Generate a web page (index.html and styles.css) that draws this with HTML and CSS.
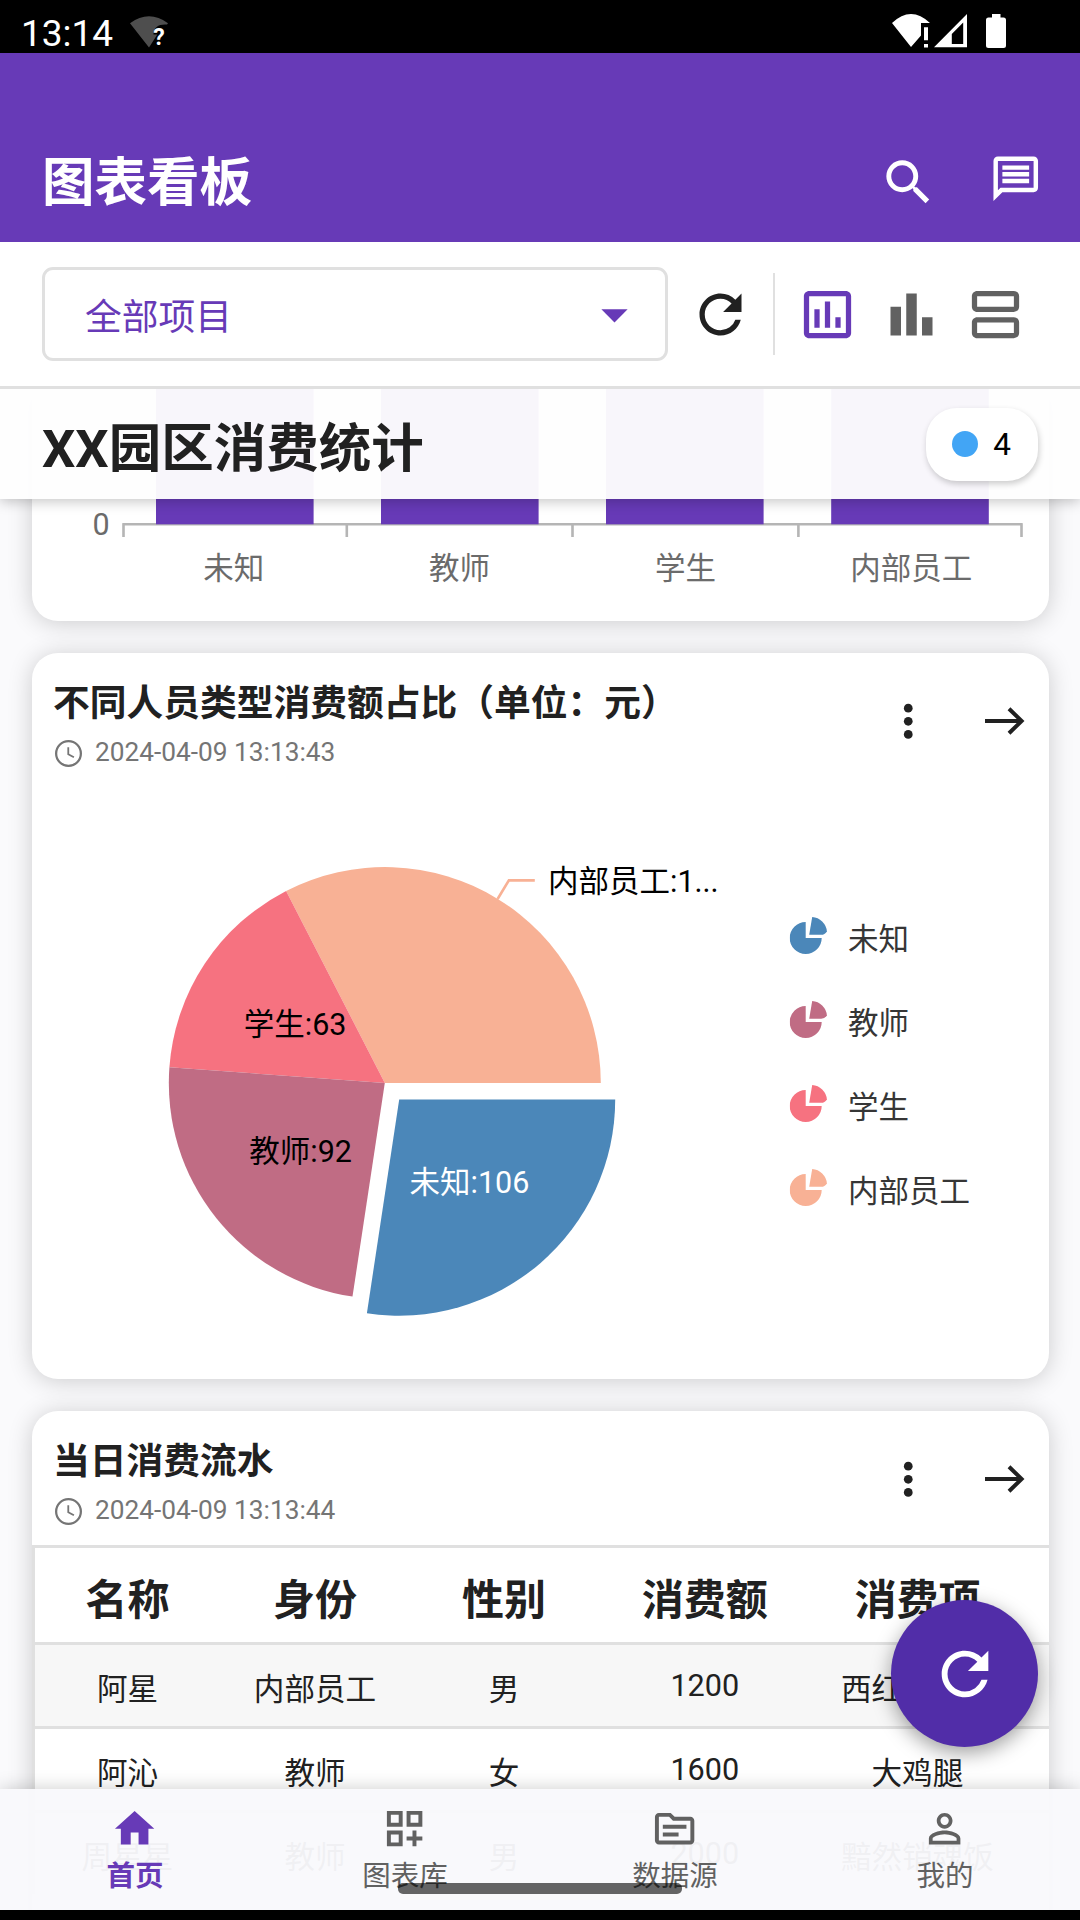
FILE: index.html
```html
<!DOCTYPE html>
<html lang="zh-CN">
<head>
  <meta charset="UTF-8">
  <title>图表看板</title>
  <link rel="stylesheet" href="styles.css">
</head>
<body>

  <svg class="defs" width="0" height="0">
    <symbol id="icon-refresh" viewBox="0 0 24 24"><path d="M17.65 6.35A7.958 7.958 0 0 0 12 4c-4.42 0-7.99 3.58-7.99 8s3.57 8 7.99 8c3.73 0 6.84-2.55 7.73-6h-2.08A5.99 5.99 0 0 1 12 18c-3.31 0-6-2.69-6-6s2.69-6 6-6c1.66 0 3.14.69 4.22 1.78L13 11h7V4l-2.35 2.35z"/></symbol>
    <symbol id="icon-clock" viewBox="0 0 24 24"><circle cx="12" cy="12" r="11" fill="none" stroke="currentColor" stroke-width="2"/><path d="M11.8 6.4v6.2l5 2.8" fill="none" stroke="currentColor" stroke-width="1.6"/></symbol>
    <symbol id="icon-more" viewBox="0 0 24 24"><circle cx="12" cy="6" r="2"/><circle cx="12" cy="12" r="2"/><circle cx="12" cy="18" r="2"/></symbol>
    <symbol id="icon-arrow" viewBox="0 0 40 28"><path d="M0 14h37M24 1.8L36.6 14 24 26.2" fill="none" stroke="currentColor" stroke-width="4"/></symbol>
    <symbol id="icon-slice" viewBox="0 0 38 38"><path d="M16 21V5a16 16 0 1 0 16 16z"/><path d="M19.5 17.8L22.5 0A16 16 0 0 1 37.2 14.4Q35 17.8 31.5 17.8z"/></symbol>
  </svg>

  <div class="phone">
    <div class="status-bar">
      <span class="clock">13:14</span>
      <svg class="status-wifi-off" width="38" height="32" viewBox="0 0 38 32">
        <path d="M0 7.2Q19-6.6 38 7.2L37 8.6C29 8 23.5 11 23.5 18.5h3.8L19 31.5z" fill="#4e4e4e"/>
        <text x="23.2" y="29.2">?</text>
      </svg>
      <div class="status-right">
        <svg width="38" height="34" viewBox="0 0 38 34" fill="#fff">
          <path d="M0 9Q19-9 38 9H29v12.5L19 33z"/>
          <path d="M32 13.2h4v13h-4zM32 30h4v3.4h-4z"/>
        </svg>
        <svg width="33" height="34" viewBox="0 0 33 34" fill="#fff">
          <path fill-rule="evenodd" d="M33 0v33.3H0zM29.2 8.6L17.8 20v10h11.4z"/>
        </svg>
        <svg class="battery" width="20" height="34" viewBox="0 0 20 34" fill="#fff">
          <path d="M6 0h8.5v3.5h3A2.5 2.5 0 0 1 20 6v25.5a2.5 2.5 0 0 1-2.5 2.5h-15A2.5 2.5 0 0 1 0 31.500V6a2.5 2.5 0 0 1 2.5-2.5H6z"/>
        </svg>
      </div>
    </div>

    <header class="app-bar">
      <h1>图表看板</h1>
      <svg class="icon-search" viewBox="0 0 24 24"><path d="M15.5 14h-.79l-.28-.27A6.471 6.471 0 0 0 16 9.5 6.5 6.5 0 1 0 9.5 16c1.61 0 3.09-.59 4.23-1.57l.27.28v.79l5 4.99L20.49 19l-4.99-5zm-6 0C7.01 14 5 11.99 5 9.5S7.01 5 9.5 5 14 7.01 14 9.5 11.99 14 9.5 14z"/></svg>
      <svg class="icon-message" viewBox="0 0 24 24"><path d="M4 4h16v12H5.17L4 17.17V4m0-2c-1.1 0-1.99.9-1.99 2L2 22l4-4h14c1.1 0 2-.9 2-2V4c0-1.1-.9-2-2-2H4zm2 10h12v2H6v-2zm0-3h12v2H6V9zm0-3h12v2H6V6z"/></svg>
    </header>

    <div class="toolbar">
      <div class="select">
        <span>全部项目</span>
        <svg class="icon" viewBox="0 0 24 24"><path d="M7 10l5 5 5-5z"/></svg>
      </div>
      <svg class="icon dark" viewBox="0 0 24 24"><use href="#icon-refresh"/></svg>
      <div class="separator"></div>
      <svg class="icon active" viewBox="0 0 24 24"><path d="M9 17H7v-7h2v7zm4 0h-2V7h2v10zm4 0h-2v-4h2v4zm2 2H5V5h14v14zm0-16H5c-1.1 0-2 .9-2 2v14c0 1.1.9 2 2 2h14c1.1 0 2-.9 2-2V5c0-1.1-.9-2-2-2z"/></svg>
      <svg class="icon" viewBox="0 0 24 24"><path d="M4 9h4v11H4zM16 13h4v7h-4zM10 4h4v16h-4z"/></svg>
      <svg class="icon" viewBox="0 0 24 24"><path d="M19 13H5c-1.1 0-2 .9-2 2v4c0 1.1.9 2 2 2h14c1.1 0 2-.9 2-2v-4c0-1.1-.9-2-2-2zm0 6H5v-4h14v4zM19 3H5c-1.1 0-2 .9-2 2v4c0 1.1.9 2 2 2h14c1.1 0 2-.9 2-2V5c0-1.1-.9-2-2-2zm0 6H5V5h14v4z"/></svg>
    </div>

    <main class="content">
      <div class="group-title">
        <h2>XX园区消费统计</h2>
        <div class="chip"><i></i><span>4</span></div>
      </div>

      <section class="card bar-card">
        <svg width="1017" height="232" viewBox="32 389 1017 232">
          <path class="axis" d="M122.3 524.2H1022.7M123.5 524V537M346.8 524V537M572.5 524V537M798.4 524V537M1021.5 524V537"/>
          <g fill="#673ab7">
            <rect x="156" y="389" width="157.6" height="135.3"/>
            <rect x="381" y="389" width="157.6" height="135.3"/>
            <rect x="606" y="389" width="157.6" height="135.3"/>
            <rect x="831.2" y="389" width="157.6" height="135.3"/>
          </g>
          <g class="axis-text">
            <text x="92.500" y="535">0</text>
            <g text-anchor="middle">
              <text x="233.8" y="579">未知</text>
              <text x="459.5" y="579">教师</text>
              <text x="685.5" y="579">学生</text>
              <text x="911.2" y="579">内部员工</text>
            </g>
          </g>
        </svg>
      </section>

      <section class="card pie-card">
        <div class="card-head">
          <div class="card-info">
            <h3>不同人员类型消费额占比（单位：元）</h3>
            <div class="time"><svg><use href="#icon-clock"/></svg>2024-04-09 13:13:43</div>
          </div>
          <svg class="more"><use href="#icon-more"/></svg>
          <svg class="arrow"><use href="#icon-arrow"/></svg>
        </div>
        <svg class="pie" width="1017" height="592" viewBox="32 787 1017 592">
          <path fill="#f8b195" d="M384.8 1083L286.1 890.9A216 216 0 0 1 600.8 1083z"/>
          <path fill="#f67280" d="M384.8 1083L169.4 1067.2A216 216 0 0 1 286.1 890.9z"/>
          <path fill="#c06c84" d="M384.8 1083L352.5 1296.6A216 216 0 0 1 169.4 1067.2z"/>
          <path fill="#4b87b9" d="M399.2 1099.6H615.2A216 216 0 0 1 366.9 1313.2z"/>
          <path fill="none" stroke="#f8b195" stroke-width="2.6" d="M497.6 899L508.9 880.4H534.8"/>
          <text x="548" y="892.3">内部员工:1...</text>
          <text x="243.8" y="1034.7">学生:63</text>
          <text x="249.3" y="1162">教师:92</text>
          <text x="409.5" y="1192.7" fill="#fff">未知:106</text>
          <g class="legend">
            <use href="#icon-slice" x="789.7" y="917" width="38" height="38" fill="#4b87b9"/>
            <use href="#icon-slice" x="789.7" y="1001" width="38" height="38" fill="#c06c84"/>
            <use href="#icon-slice" x="789.7" y="1085" width="38" height="38" fill="#f67280"/>
            <use href="#icon-slice" x="789.7" y="1169" width="38" height="38" fill="#f8b195"/>
            <text x="848" y="950.3">未知</text>
            <text x="848" y="1034.3">教师</text>
            <text x="848" y="1118.3">学生</text>
            <text x="848" y="1202.3">内部员工</text>
          </g>
        </svg>
      </section>

      <section class="card table-card">
        <div class="card-head">
          <div class="card-info">
            <h3>当日消费流水</h3>
            <div class="time"><svg><use href="#icon-clock"/></svg>2024-04-09 13:13:44</div>
          </div>
          <svg class="more"><use href="#icon-more"/></svg>
          <svg class="arrow"><use href="#icon-arrow"/></svg>
        </div>
        <div class="table">
          <div class="row head"><span>名称</span><span>身份</span><span>性别</span><span>消费额</span><span>消费项</span></div>
          <div class="row odd"><span>阿星</span><span>内部员工</span><span>男</span><span class="num">1200</span><span>西红柿炒蛋</span></div>
          <div class="row"><span>阿沁</span><span>教师</span><span>女</span><span class="num">1600</span><span>大鸡腿</span></div>
          <div class="row odd"><span>周星星</span><span>教师</span><span>男</span><span class="num">2000</span><span>黯然销魂饭</span></div>
        </div>
      </section>

      <button class="fab"><svg viewBox="0 0 24 24"><use href="#icon-refresh"/></svg></button>

      <nav class="tabs">
        <a class="tab active">
          <svg viewBox="0 0 24 24"><path d="M10 20v-6h4v6h5v-8h3L12 3 2 12h3v8z"/></svg>
          <span>首页</span>
        </a>
        <a class="tab">
          <svg viewBox="0 0 24 24"><path d="M3 11h8V3H3v8zm2-6h4v4H5V5zM13 3v8h8V3h-8zm6 6h-4V5h4v4zM3 21h8v-8H3v8zm2-6h4v4H5v-4zM18 13h-2v3h-3v2h3v3h2v-3h3v-2h-3z"/></svg>
          <span>图表库</span>
        </a>
        <a class="tab">
          <svg viewBox="0 0 24 24"><path d="M20 6h-8l-2-2H4c-1.1 0-1.99.9-1.99 2L2 18c0 1.1.9 2 2 2h16c1.1 0 2-.9 2-2V8c0-1.1-.9-2-2-2zm0 12H4V6h5.17l2 2H20v10zm-2-6H6v-2h12v2zm-4 4H6v-2h8v2z"/></svg>
          <span>数据源</span>
        </a>
        <a class="tab">
          <svg viewBox="0 0 24 24"><path d="M12 5.9a2.1 2.1 0 1 1 0 4.2 2.1 2.1 0 0 1 0-4.2m0 9c2.97 0 6.1 1.46 6.1 2.1v1.1H5.900V17c0-.64 3.13-2.1 6.1-2.1M12 4C9.79 4 8 5.79 8 8s1.79 4 4 4 4-1.79 4-4-1.79-4-4-4zm0 9c-2.67 0-8 1.34-8 4v3h16v-3c0-2.66-5.33-4-8-4z"/></svg>
          <span>我的</span>
        </a>
        <div class="gesture"></div>
      </nav>
    </main>
  </div>

</body>
</html>
```
FILE: styles.css
```css
* {
  box-sizing: border-box;
}

body {
  margin: 0;
  background: #000;
  font-family: Roboto, "Noto Sans CJK SC", sans-serif;
  color: #212121;
}

h1, h2, h3 {
  margin: 0;
  white-space: nowrap;
}

svg {
  display: block;
  flex: none;
  fill: currentColor;
}

.defs {
  position: absolute;
}

.phone {
  width: 1080px;
  height: 1920px;
  display: flex;
  flex-direction: column;
  overflow: hidden;
  padding-bottom: 10px;
}

/* status bar */
.status-bar {
  height: 53px;
  display: flex;
  align-items: flex-start;
  padding: 14px 74px 0 21px;
  color: #fff;
}

.clock {
  font-size: 37px;
  line-height: 40px;
  width: 108.5px;
}

.status-wifi-off {
  margin-top: 2px;
  overflow: visible;
}

.status-wifi-off text {
  font-size: 23px;
  font-weight: 700;
  fill: #fff;
}

.status-right {
  margin-left: auto;
  display: flex;
  gap: 4.5px;
}

.battery {
  margin-left: 14.5px;
}

/* app bar */
.app-bar {
  height: 189px;
  display: flex;
  padding: 99px 37.5px 0 42px;
  background: #673ab7;
  color: #fff;
}

.app-bar h1 {
  flex: 1;
  font-size: 52.5px;
  line-height: 63px;
  font-weight: 700;
}

.icon-search {
  width: 58.8px;
  height: 58.8px;
  margin-top: 0.7px;
  margin-right: 51px;
}

.icon-message {
  width: 53.5px;
  height: 53.5px;
}

/* toolbar */
.toolbar {
  height: 147px;
  display: flex;
  align-items: center;
  gap: 21px;
  padding: 0 42px;
  background: #fff;
  border-bottom: 3px solid #e0e0e0;
  color: #616161;
}

.select {
  width: 625.5px;
  height: 94px;
  display: flex;
  align-items: center;
  justify-content: space-between;
  padding: 0 19px 0 40px;
  border: 3px solid #e0e0e0;
  border-radius: 11px;
  color: #673ab7;
  font-size: 36.75px;
  line-height: 50px;
}

.select span {
  padding-top: 7px;
}

.icon {
  width: 63px;
  height: 63px;
}

.icon.dark {
  color: #212121;
}

.icon.active {
  color: #673ab7;
}

.separator {
  width: 2.6px;
  height: 82px;
  background: #e0e0e0;
}

/* scrolling content */
.content {
  position: relative;
  flex: 1;
  overflow: hidden;
  background: #fafafc;
}

.group-title {
  position: absolute;
  z-index: 2;
  top: 0;
  left: 0;
  right: 0;
  height: 110px;
  display: flex;
  align-items: center;
  justify-content: space-between;
  padding: 0 42px;
  background: rgba(254, 254, 254, 0.96);
  box-shadow: 0 3px 12px rgba(0, 0, 0, 0.22);
}

.group-title h2 {
  font-size: 52.5px;
  line-height: 66px;
  padding-top: 9px;
  font-weight: 700;
}

.chip {
  width: 112px;
  height: 73px;
  display: flex;
  align-items: center;
  gap: 15px;
  padding-left: 26px;
  border-radius: 31px;
  background: #fff;
  box-shadow: 1px 3px 6px rgba(0, 0, 0, 0.2);
  color: #000;
  font-size: 31.5px;
}

.chip i {
  width: 26.25px;
  height: 26.25px;
  border-radius: 50%;
  background: #42a5f5;
}

.card {
  margin: 0 31.5px 31.7px;
  border-radius: 26px;
  background: #fff;
  box-shadow: 0 2px 24px rgba(0, 0, 0, 0.19);
}

.bar-card {
  height: 232.3px;
  border-radius: 0 0 26px 26px;
}

.axis {
  fill: none;
  stroke: #b5b5b5;
  stroke-width: 2.6;
}

.axis-text {
  font-size: 30.5px;
  fill: #6b6b6b;
}

.pie-card {
  height: 726px;
}

.card-head {
  height: 134px;
  display: flex;
  padding: 0 23.5px 0 21.5px;
}

.card-info {
  flex: 1;
}

.card-info h3 {
  font-size: 36.75px;
  line-height: 50px;
  padding-top: 26px;
  font-weight: 700;
}

.time {
  display: flex;
  align-items: center;
  gap: 13px;
  padding-top: 8px;
  padding-left: 2px;
  font-size: 26.25px;
  line-height: 30px;
  color: #757575;
}

.time svg {
  width: 27px;
  height: 27px;
  margin-top: 3px;
}

.more {
  width: 52.5px;
  height: 52.5px;
  margin: 42.5px 50px 0 0;
}

.arrow {
  width: 40px;
  height: 28px;
  margin: 54.5px 0 0 1px;
}

.pie {
  font-size: 30.5px;
  fill: #000;
}

.legend text {
  fill: #363636;
}

/* table */
.table-card {
  height: 560px;
}

.table {
  border-left: 3px solid #e0e0e0;
  overflow: hidden;
}

.row {
  height: 84px;
  display: grid;
  grid-template-columns: 186px 189px 189px 212.6px 212.6px;
  align-items: center;
  border-top: 3px solid #e0e0e0;
  font-size: 30.6px;
  line-height: 40px;
  text-align: center;
}

.row span {
  padding-top: 9px;
}

.row .num {
  padding-top: 2px;
}

.row.odd {
  background: #f7f7f7;
}

.row.head {
  height: 97px;
  font-size: 42px;
  font-weight: 700;
}

.row.head span {
  padding-top: 13px;
}

.fab {
  position: absolute;
  z-index: 2;
  left: 891px;
  top: 1211px;
  width: 147px;
  height: 147px;
  display: flex;
  align-items: center;
  justify-content: center;
  padding: 0;
  border: none;
  border-radius: 50%;
  background: #512da8;
  box-shadow: 0 6px 20px rgba(0, 0, 0, 0.38);
  color: #fff;
}

.fab svg {
  width: 70px;
  height: 70px;
}

/* bottom tabs */
.tabs {
  position: absolute;
  z-index: 3;
  left: 0;
  right: 0;
  bottom: 0;
  height: 121px;
  display: flex;
  background: rgba(249, 249, 252, 0.96);
  box-shadow: 0 0 18px rgba(0, 0, 0, 0.2);
}

.tab {
  flex: 1;
  display: flex;
  flex-direction: column;
  align-items: center;
  padding-top: 15.5px;
  font-size: 28.5px;
  line-height: 36px;
  color: #616161;
}

.tab svg {
  width: 47.25px;
  height: 47.25px;
}

.tab span {
  margin-top: 7.5px;
}

.tab.active {
  color: #673ab7;
  font-weight: 700;
}

.gesture {
  position: absolute;
  left: 398px;
  bottom: 16px;
  width: 284px;
  height: 11px;
  border-radius: 5px;
  background: rgba(0, 0, 0, 0.6);
}
```
